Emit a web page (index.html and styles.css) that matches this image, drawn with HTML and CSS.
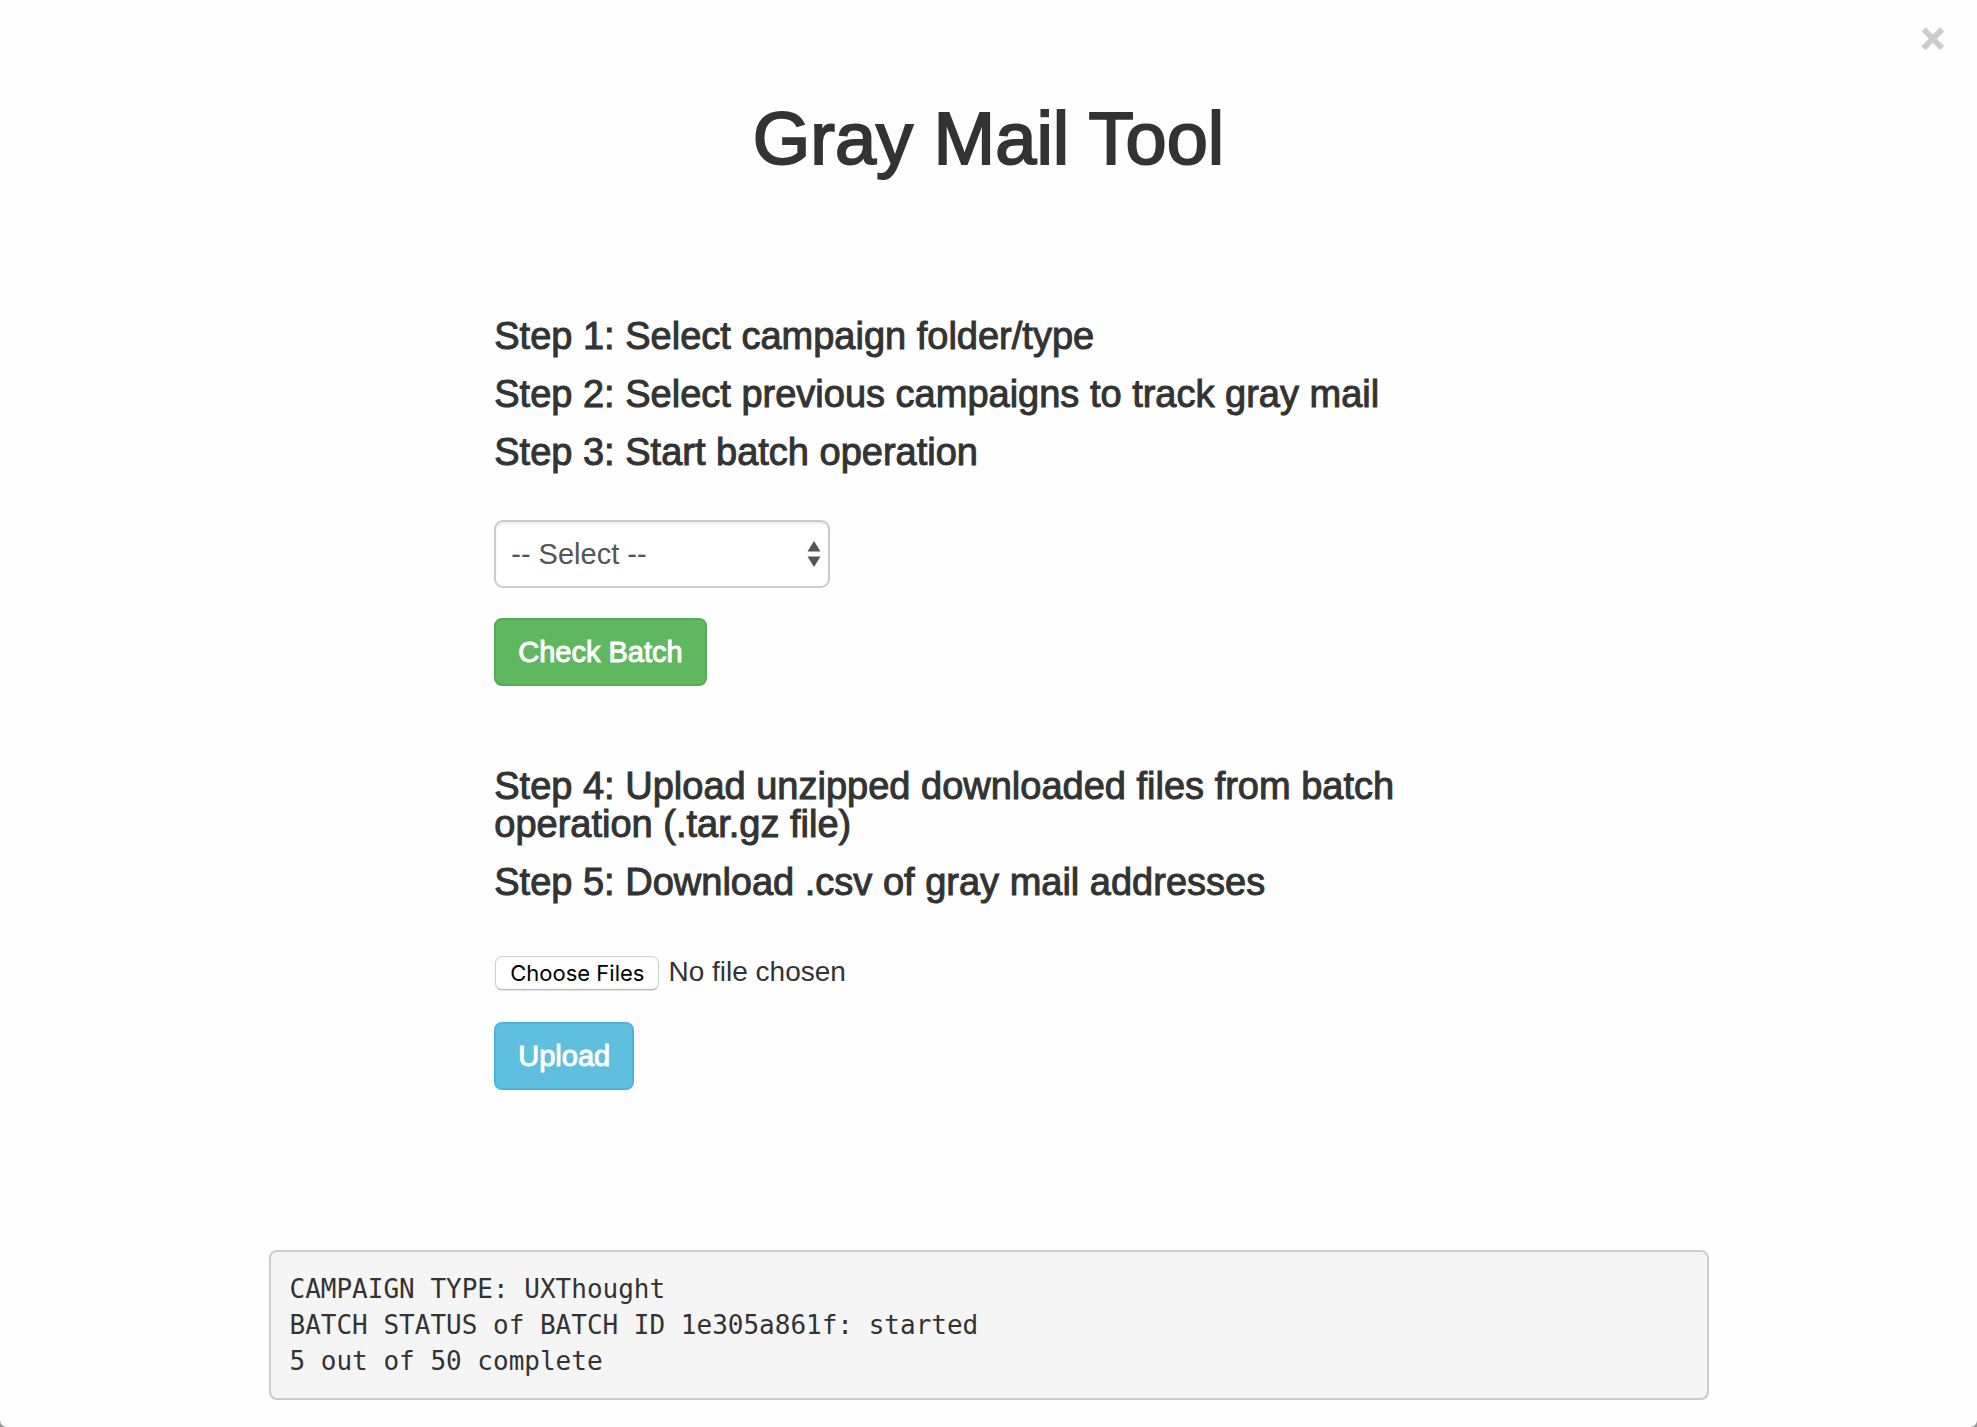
FILE: index.html
```html
<!DOCTYPE html>
<html lang="en">
<head>
<meta charset="utf-8">
<title>Gray Mail Tool</title>
<link rel="stylesheet" href="styles.css">
</head>
<body>
<div class="window">
  <header class="topbar">
    <button class="close" type="button" aria-label="Close">×</button>
  </header>
  <main>
    <h1 class="title">Gray Mail Tool</h1>
    <form class="tool">
      <section class="group">
        <div class="steps">
          <h3>Step 1: Select campaign folder/type</h3>
          <h3>Step 2: Select previous campaigns to track gray mail</h3>
          <h3>Step 3: Start batch operation</h3>
        </div>
        <div class="controls">
          <div class="select-wrap">
            <select class="select" aria-label="Campaign type">
              <option>-- Select --</option>
            </select>
            <svg class="arrows" width="14" height="26" viewBox="0 0 14 26" aria-hidden="true">
              <path d="M7 0 13.5 10.500H.5ZM.5 15.500H13.500L7 26Z" fill="#555"/>
            </svg>
          </div>
          <button class="btn btn-success" type="button">Check Batch</button>
        </div>
      </section>
      <section class="group">
        <div class="steps">
          <h3>Step 4: Upload unzipped downloaded files from batch operation (.tar.gz file)</h3>
          <h3>Step 5: Download .csv of gray mail addresses</h3>
        </div>
        <div class="controls controls-upload">
          <input class="file" type="file" multiple aria-label="Batch files">
          <button class="btn btn-info" type="button">Upload</button>
        </div>
      </section>
    </form>
    <pre class="log">CAMPAIGN TYPE: UXThought
BATCH STATUS of BATCH ID 1e305a861f: started
5 out of 50 complete</pre>
  </main>
</div>
</body>
</html>
```
FILE: styles.css
```css
* { box-sizing: border-box; }

html { background: #999; }

body {
  margin: 0;
  color: #333;
  font: 28px/40px "Helvetica Neue", "Liberation Sans", Arial, sans-serif;
}

.window {
  min-height: 100vh;
  padding-bottom: 26px;
  background: #fefefe;
  border-radius: 0 0 7px 7px;
}

.topbar {
  display: flex;
  justify-content: flex-end;
  padding: 18px 32px 0;
}

.close {
  padding: 0;
  border: 0;
  background: none;
  color: #ccc;
  font: bold 42px/42px "Liberation Sans", Arial, sans-serif;
  -webkit-text-stroke: 1px #ccc;
  cursor: pointer;
}

.title {
  margin: 39px 0 138px;
  font-size: 74px;
  line-height: 80px;
  font-weight: 500;
  text-align: center;
  -webkit-text-stroke: 2px #333;
}

.tool {
  display: flex;
  flex-direction: column;
  gap: 81px;
  width: 50%;
  margin: 0 auto 160px;
}

.steps {
  display: flex;
  flex-direction: column;
  gap: 20px;
  margin-bottom: 49px;
}

.steps h3 {
  margin: 0;
  font-size: 38px;
  line-height: 38px;
  font-weight: 500;
  -webkit-text-stroke: 1px #333;
}

.controls {
  display: flex;
  flex-direction: column;
  align-items: flex-start;
  gap: 30px;
}

.controls-upload { padding-top: 2px; }

.select-wrap { position: relative; }

.select {
  appearance: none;
  display: block;
  width: 336px;
  height: 68px;
  padding: 0 40px 0 15px;
  border: 2px solid #ccc;
  border-radius: 9px;
  background: #fff;
  box-shadow: inset 0 2px 2px rgba(0, 0, 0, .075);
  color: #555;
  font: inherit;
  font-size: 29px;
}

.arrows {
  position: absolute;
  top: 21px;
  right: 9px;
  pointer-events: none;
}

.btn {
  height: 68px;
  padding: 0 22px;
  border: 2px solid;
  border-radius: 8px;
  color: #fff;
  font: inherit;
  font-size: 29px;
  -webkit-text-stroke: 1px #fff;
  cursor: pointer;
}

.btn-success { background: #5fb760; border-color: #50ae54; }
.btn-info { background: #5fbfde; border-color: #49b6d9; }

.file {
  height: 40px;
  font: inherit;
  color: #333;
}

.file::file-selector-button {
  height: 34px;
  margin: 0 9px 0 1px;
  padding: 0 14px;
  border: 1px solid #d0d0d0;
  border-bottom-color: #b5b5b5;
  border-radius: 7px;
  background: #fff;
  box-shadow: 0 1px 1px rgba(0, 0, 0, .1);
  color: #000;
  font: 22px/30px Inter, sans-serif;
}

.log {
  max-width: 1440px;
  margin: 0 auto;
  padding: 19px;
  border: 2px solid #ccc;
  border-radius: 8px;
  background: #f5f5f5;
  font: 26px/36px Menlo, "DejaVu Sans Mono", monospace;
  white-space: pre-wrap;
}
```
